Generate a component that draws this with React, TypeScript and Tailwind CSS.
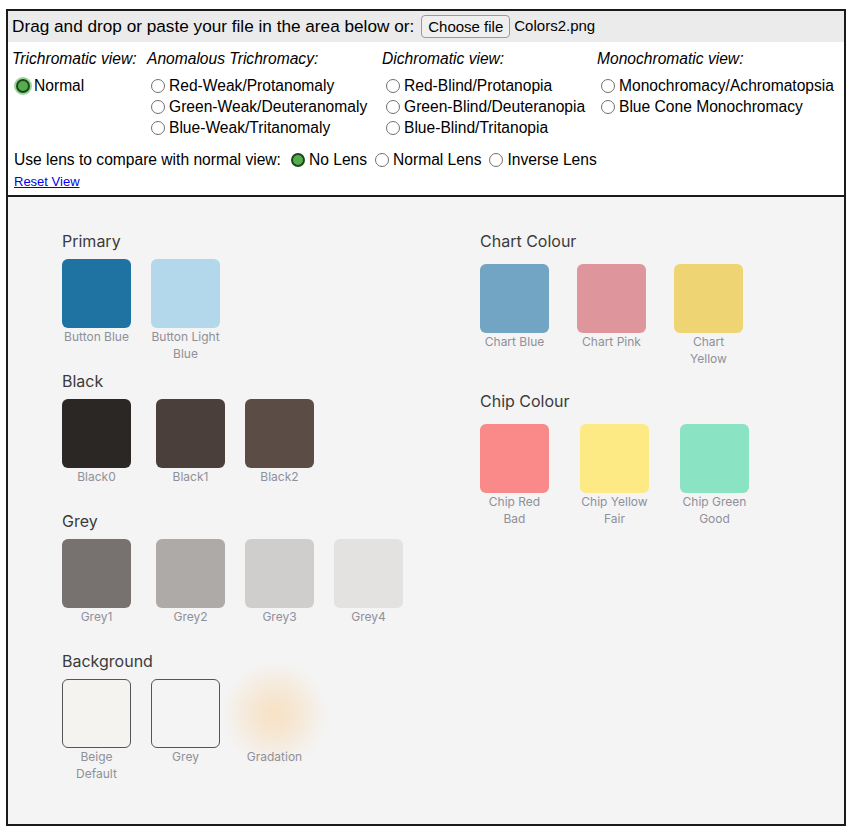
import React from "react"

type Swatch = {
  color: string
  label: string[]
  gap: string
  outlined?: boolean
  glow?: boolean
}

const leftSections: { title: string; items: Swatch[] }[] = [
  {
    title: "Primary",
    items: [
      { color: "bg-[#1f73a2]", label: ["Button Blue"], gap: "" },
      { color: "bg-[#b3d8ec]", label: ["Button Light", "Blue"], gap: "ml-[20px]" },
    ],
  },
  {
    title: "Black",
    items: [
      { color: "bg-[#2b2725]", label: ["Black0"], gap: "" },
      { color: "bg-[#4a3f3b]", label: ["Black1"], gap: "ml-[25px]" },
      { color: "bg-[#5b4c46]", label: ["Black2"], gap: "ml-[20px]" },
    ],
  },
  {
    title: "Grey",
    items: [
      { color: "bg-[#77716f]", label: ["Grey1"], gap: "" },
      { color: "bg-[#aeaaa7]", label: ["Grey2"], gap: "ml-[25px]" },
      { color: "bg-[#d0cecc]", label: ["Grey3"], gap: "ml-[20px]" },
      { color: "bg-[#e3e2e0]", label: ["Grey4"], gap: "ml-[20px]" },
    ],
  },
  {
    title: "Background",
    items: [
      { color: "bg-[#f5f3ef]", label: ["Beige", "Default"], gap: "", outlined: true },
      { color: "bg-[#f4f4f4]", label: ["Grey"], gap: "ml-[20px]", outlined: true },
      { color: "", label: ["Gradation"], gap: "ml-[20px]", glow: true },
    ],
  },
]

const rightSections: { title: string; items: Swatch[] }[] = [
  {
    title: "Chart Colour",
    items: [
      { color: "bg-[#72a5c3]", label: ["Chart Blue"], gap: "" },
      { color: "bg-[#de959c]", label: ["Chart Pink"], gap: "ml-[28px]" },
      { color: "bg-[#eed472]", label: ["Chart", "Yellow"], gap: "ml-[28px]" },
    ],
  },
  {
    title: "Chip Colour",
    items: [
      { color: "bg-[#fa8a89]", label: ["Chip Red", "Bad"], gap: "" },
      { color: "bg-[#feea85]", label: ["Chip Yellow", "Fair"], gap: "ml-[31px]" },
      { color: "bg-[#8ae4c4]", label: ["Chip Green", "Good"], gap: "ml-[31px]" },
    ],
  },
]

function Radio({ checked, focus }: { checked?: boolean; focus?: boolean }) {
  if (checked) {
    return (
      <span
        className={`inline-block w-[14px] h-[14px] rounded-full border-2 border-[#1d461d] bg-[#52ad4a] shrink-0 ${
          focus ? "ring-2 ring-[#9ad69a]" : ""
        }`}
      />
    )
  }
  return <span className="inline-block w-[14px] h-[14px] rounded-full border border-[#707070] bg-white shrink-0" />
}

function Option({ label, checked, focus }: { label: string; checked?: boolean; focus?: boolean }) {
  return (
    <label className="flex items-center h-[21px] pl-[4px]">
      <Radio checked={checked} focus={focus} />
      <span className="ml-[4px]">{label}</span>
    </label>
  )
}

function Item({ s }: { s: Swatch }) {
  return (
    <div className={`flex flex-col items-center w-[69px] ${s.gap}`}>
      {s.glow ? (
        <div className="w-[69px] h-[69px] flex items-center justify-center">
          <div className="w-[110px] h-[110px] shrink-0 rounded-full bg-[radial-gradient(circle,#f6e2c4_0%,#f6e8d6_30%,#f4f4f4_68%)]" />
        </div>
      ) : (
        <div
          className={`w-[69px] h-[69px] rounded-[6px] ${s.color} ${
            s.outlined ? "border-[1.5px] border-[#555]" : ""
          }`}
        />
      )}
      <div className="whitespace-nowrap text-center text-[12px] leading-[17px] text-[#8f909a]">
        {s.label.map((l) => (
          <div key={l}>{l}</div>
        ))}
      </div>
    </div>
  )
}

export default function App() {
  return (
    <div className="min-h-[834px] bg-white pt-[9px] pl-[6px]">
      <div className="w-[840px] border-2 border-[#1a1a1a] font-['Liberation_Sans',Arial,sans-serif] text-black">
        {/* file row */}
        <div className="flex items-center h-[31px] bg-[#ebebeb] pl-[4px] text-[17.2px]">
          <span>Drag and drop or paste your file in the area below or:</span>
          <button className="ml-[7px] h-[23px] px-[6px] rounded-[4px] border border-[#9a9a9a] bg-[#f0f0f0] text-[15px] leading-none">
            Choose file
          </button>
          <span className="ml-[4px] text-[15px]">Colors2.png</span>
        </div>

        {/* options */}
        <div className="bg-white pl-[4px] pt-[8px] text-[15.6px] leading-[18px] h-[155px] border-b-2 border-[#1a1a1a]">
          <div className="grid grid-cols-[135px_235px_215px_1fr]">
            <div>
              <div className="italic">Trichromatic view:</div>
              <div className="mt-[7px]">
                <Option label="Normal" checked focus />
              </div>
            </div>
            <div>
              <div className="italic">Anomalous Trichromacy:</div>
              <div className="mt-[7px]">
                <Option label="Red-Weak/Protanomaly" />
                <Option label="Green-Weak/Deuteranomaly" />
                <Option label="Blue-Weak/Tritanomaly" />
              </div>
            </div>
            <div>
              <div className="italic">Dichromatic view:</div>
              <div className="mt-[7px]">
                <Option label="Red-Blind/Protanopia" />
                <Option label="Green-Blind/Deuteranopia" />
                <Option label="Blue-Blind/Tritanopia" />
              </div>
            </div>
            <div>
              <div className="italic">Monochromatic view:</div>
              <div className="mt-[7px]">
                <Option label="Monochromacy/Achromatopsia" />
                <Option label="Blue Cone Monochromacy" />
              </div>
            </div>
          </div>
          <div className="flex items-center mt-[11px] h-[21px] pl-[2px]">
            <span>Use lens to compare with normal view:</span>
            <span className="ml-[10px] flex items-center">
              <Radio checked />
              <span className="ml-[4px]">No Lens</span>
            </span>
            <span className="ml-[8px] flex items-center">
              <Radio />
              <span className="ml-[4px]">Normal Lens</span>
            </span>
            <span className="ml-[8px] flex items-center">
              <Radio />
              <span className="ml-[4px]">Inverse Lens</span>
            </span>
          </div>
          <a href="#" className="block mt-[3px] pl-[2px] text-[13px] leading-[18px] text-[#0000ee] underline">
            Reset View
          </a>
        </div>

        {/* image */}
        <div className="bg-[#f4f4f4] h-[627px] flex pt-[34px] pl-[54px] font-['Inter',sans-serif]">
          <div className="w-[418px]">
            {leftSections.map((sec) => (
              <div key={sec.title} className="h-[140px]">
                <div className="text-[16px] leading-[20px] text-[#3b3b3b]">{sec.title}</div>
                <div className="flex mt-[8px]">
                  {sec.items.map((s) => (
                    <Item key={s.label.join()} s={s} />
                  ))}
                </div>
              </div>
            ))}
          </div>
          <div>
            {rightSections.map((sec) => (
              <div key={sec.title} className="h-[160px]">
                <div className="text-[16px] leading-[20px] text-[#3b3b3b]">{sec.title}</div>
                <div className="flex mt-[13px]">
                  {sec.items.map((s) => (
                    <Item key={s.label.join()} s={s} />
                  ))}
                </div>
              </div>
            ))}
          </div>
        </div>
      </div>
    </div>
  )
}
